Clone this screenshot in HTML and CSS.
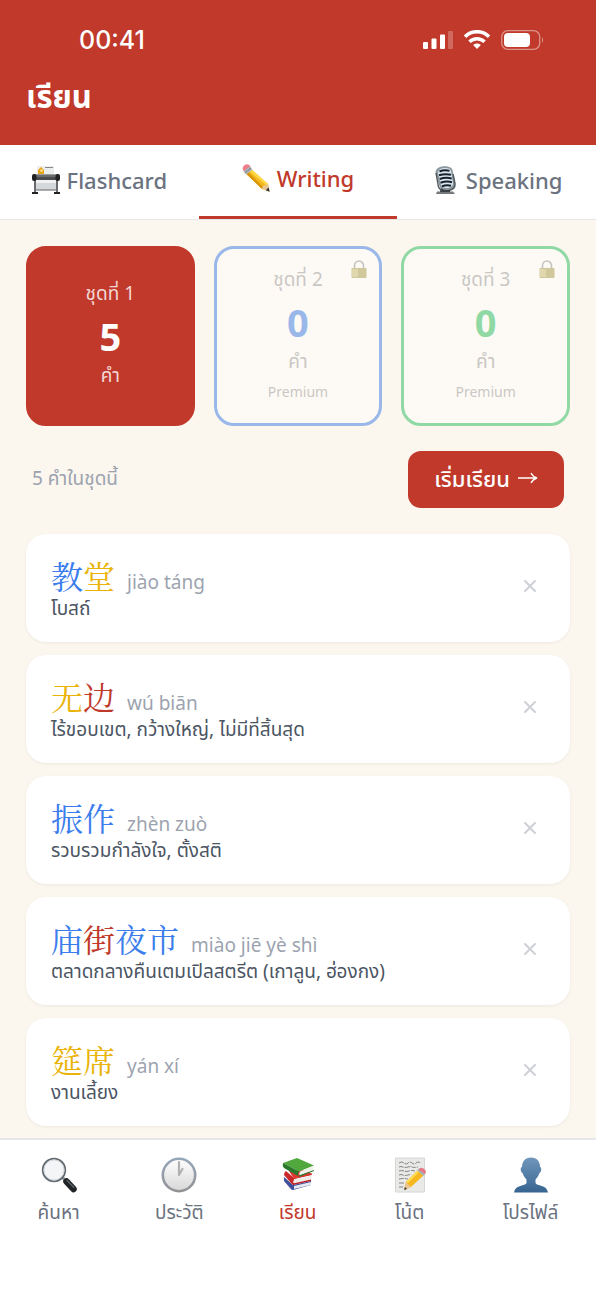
FILE: index.html
```html
<!DOCTYPE html>
<html lang="th">
<head>
<meta charset="utf-8">
<meta name="viewport" content="width=device-width, initial-scale=1">
<title>เรียน</title>
<link rel="stylesheet" href="styles.css">
</head>
<body>
<div class="app">
  <header class="header">
    <div class="status">
      <span class="clock">00:41</span>
      <div class="status-icons">
        <svg width="30" height="20" viewBox="0 0 30 20" fill="#fff" aria-hidden="true"><rect x="0" y="12" width="5" height="7" rx="1"/><rect x="8.500" y="8.500" width="5" height="10.500" rx="1"/><rect x="17" y="4.500" width="5" height="14.500" rx="1"/><rect x="25" y="1" width="5" height="18" rx="1" opacity=".25"/></svg>
        <svg width="28" height="20" viewBox="0 0 28 20" fill="none" stroke="#fff" stroke-width="3.600" aria-hidden="true"><path d="M2 6.700a17 17 0 0 1 24 0"/><path d="M6.500 11.800a10.800 10.800 0 0 1 15 0"/><path d="M14 19l-3.800-4a5.600 5.600 0 0 1 7.600 0z" fill="#fff" stroke="none"/></svg>
        <svg width="44" height="20" viewBox="0 0 44 20" aria-hidden="true"><rect x=".7" y=".7" width="38" height="18.600" rx="6" fill="none" stroke="#fff" stroke-width="1.300" opacity=".45"/><rect x="3" y="3" width="26" height="14" rx="4" fill="#fff"/><path d="M41 7q2 3 0 6z" fill="#fff" opacity=".5"/></svg>
      </div>
    </div>
    <h1 class="title">เรียน</h1>
  </header>

  <nav class="tabs">
    <button class="tab"><svg class="tab-icon" viewBox="0 0 28 28" aria-hidden="true"><path d="M5 0h17v10H5z" fill="#eceeed"/><path d="M9 1l3 3v4H6V4z" fill="#e8a51a"/><path d="M8.500 3.500h2v2h-2z" fill="#fff3c0"/><path d="M13 1.500h8" stroke="#888"/><path d="M4 14h20v10H4z" fill="#d5d8da"/><path d="M4 14h20v3H4z" fill="#f1f2f3"/><path d="M3 14v12M25 14v12" stroke="#44474a" stroke-width="1.600"/><path d="M3 24h22" stroke="#75797b" stroke-width="1.200"/><rect x="1" y="8.500" width="26" height="5.500" rx="2" fill="#4a4c4e"/><path d="M4 10h20" stroke="#8b8e90"/><rect x="0" y="8" width="4.500" height="7" rx="2" fill="#222"/><rect x="23.500" y="8" width="4.500" height="7" rx="2" fill="#222"/><path d="M0 27h6M22 27h6" stroke="#222" stroke-width="1.800"/></svg>Flashcard</button>
    <button class="tab active" aria-current="page"><svg class="tab-icon" viewBox="0 0 28 28" aria-hidden="true"><path d="M8 4l18 16 1.500 7.500L20 25 2 8z" fill="#f3b91d"/><path d="M8 4l18 16-2 1L5.500 5.500z" fill="#ffd94a"/><path d="M3.500 9L20 25l1-2L5 7z" fill="#d89408"/><path d="M1 3Q3-.8 7 .8l2 2.400L2.500 8Q0 5.500 1 3z" fill="#ed7e88"/><path d="M7.500 2.500l3 3-6 5-3-3z" fill="#abb3ba"/><path d="M9 4L3.200 8.800" stroke="#777f88"/><path d="M20 25l1-3 5-2 1.500 7.500z" fill="#e9c695"/><path d="M24.800 25l2-1.500.8 4.200-3.600-1.200z" fill="#363636"/></svg>Writing</button>
    <button class="tab"><svg class="tab-icon" viewBox="0 0 28 28" aria-hidden="true"><path d="M6 25.500h16l2 2.500H5z" fill="#75797c"/><path d="M10 21h10l-1 5H9z" fill="#3b4044"/><path d="M4.500 6Q5 1 13 .3 20 0 21.500 4L24 17q0 6-7 7-7 .5-8.500-4z" fill="#8b979f"/><path d="M7 7Q7 2.500 13 2q6-.5 7 3l2 12q0 4-5 5-6 .5-7-3z" fill="#dce6ec"/><path d="M8.500 5.500q5-2 10-.6M8 9.300q6-2 12-.5M8.700 13q6-2 12-.5M9.500 16.700q6-2 11.500-.5M11 20.300q5-1.800 9-.5" fill="none" stroke="#15222e" stroke-width="2"/><path d="M22 8l2 10q0 5-5 6" fill="none" stroke="#565e63" stroke-width="1.600"/><path d="M5 7l2.500 14 3 4" fill="none" stroke="#50575b" stroke-width="1.400"/></svg>Speaking</button>
  </nav>

  <main class="content">
    <section class="sets">
      <button class="set set-current"><span class="set-name">ชุดที่ 1</span><strong class="set-count">5</strong><span class="set-unit">คำ</span></button>
      <button class="set set-blue"><svg class="lock" viewBox="0 0 16 18" aria-hidden="true"><path d="M3.500 9V5.500a4.500 4.500 0 0 1 9 0V9" fill="none" stroke="#8d9294" stroke-width="1.600"/><rect x=".5" y="8" width="15" height="10" rx="1" fill="#a69a48"/><path d="M1 9h6v8H1z" fill="#c5bb70"/></svg><span class="set-name">ชุดที่ 2</span><strong class="set-count">0</strong><span class="set-unit">คำ</span><span class="set-plan">Premium</span></button>
      <button class="set set-green"><svg class="lock" viewBox="0 0 16 18" aria-hidden="true"><path d="M3.500 9V5.500a4.500 4.500 0 0 1 9 0V9" fill="none" stroke="#8d9294" stroke-width="1.600"/><rect x=".5" y="8" width="15" height="10" rx="1" fill="#a69a48"/><path d="M1 9h6v8H1z" fill="#c5bb70"/></svg><span class="set-name">ชุดที่ 3</span><strong class="set-count">0</strong><span class="set-unit">คำ</span><span class="set-plan">Premium</span></button>
    </section>

    <div class="summary">
      <span class="summary-text">5 คำในชุดนี้</span>
      <button class="start">เริ่มเรียน <svg width="21" height="14" viewBox="0 0 21 14" fill="none" stroke="#fff" stroke-width="1.300" aria-hidden="true"><path d="M1 7h18M14 2q2 4 6 5-4 1-6 5"/></svg></button>
    </div>

    <ul class="words">
      <li class="word"><div class="word-text"><div class="word-head"><span class="hanzi" lang="zh-Hans"><span class="t4">教</span><span class="t2">堂</span></span><span class="pinyin">jiào táng</span></div><p class="meaning">โบสถ์</p></div><button class="remove" aria-label="ลบ"><svg width="14" height="14" viewBox="0 0 14 14"><path d="M2 2l10 10M12 2L2 12"/></svg></button></li>
      <li class="word"><div class="word-text"><div class="word-head"><span class="hanzi" lang="zh-Hans"><span class="t2">无</span><span class="t1">边</span></span><span class="pinyin">wú biān</span></div><p class="meaning">ไร้ขอบเขต, กว้างใหญ่, ไม่มีที่สิ้นสุด</p></div><button class="remove" aria-label="ลบ"><svg width="14" height="14" viewBox="0 0 14 14"><path d="M2 2l10 10M12 2L2 12"/></svg></button></li>
      <li class="word"><div class="word-text"><div class="word-head"><span class="hanzi" lang="zh-Hans"><span class="t4">振</span><span class="t4">作</span></span><span class="pinyin">zhèn zuò</span></div><p class="meaning">รวบรวมกำลังใจ, ตั้งสติ</p></div><button class="remove" aria-label="ลบ"><svg width="14" height="14" viewBox="0 0 14 14"><path d="M2 2l10 10M12 2L2 12"/></svg></button></li>
      <li class="word"><div class="word-text"><div class="word-head"><span class="hanzi" lang="zh-Hans"><span class="t4">庙</span><span class="t1">街</span><span class="t4">夜</span><span class="t4">市</span></span><span class="pinyin">miào jiē yè shì</span></div><p class="meaning">ตลาดกลางคืนเตมเปิลสตรีต (เกาลูน, ฮ่องกง)</p></div><button class="remove" aria-label="ลบ"><svg width="14" height="14" viewBox="0 0 14 14"><path d="M2 2l10 10M12 2L2 12"/></svg></button></li>
      <li class="word"><div class="word-text"><div class="word-head"><span class="hanzi" lang="zh-Hans"><span class="t2">筵</span><span class="t2">席</span></span><span class="pinyin">yán xí</span></div><p class="meaning">งานเลี้ยง</p></div><button class="remove" aria-label="ลบ"><svg width="14" height="14" viewBox="0 0 14 14"><path d="M2 2l10 10M12 2L2 12"/></svg></button></li>
    </ul>
  </main>

  <nav class="bottom">
    <a class="nav-item" href="#search"><svg class="nav-icon" viewBox="0 0 36 36" aria-hidden="true"><path d="M21 20l5 5" stroke="#8e959a" stroke-width="3"/><path d="M25.500 24.500l7 7.500" stroke="#202426" stroke-width="6.500" stroke-linecap="round"/><path d="M26 23.500l7 7" stroke="#62686c" stroke-width="1.200" stroke-linecap="round"/><circle cx="13" cy="13" r="11.300" fill="#f3f5f7" stroke="#626a70" stroke-width="1.800"/><circle cx="13" cy="13" r="10.200" fill="none" stroke="#c9cfd4"/></svg>ค้นหา</a>
    <a class="nav-item" href="#history"><svg class="nav-icon" viewBox="0 0 36 36" aria-hidden="true"><defs><linearGradient id="face" x2="0" y2="1"><stop stop-color="#fff"/><stop offset="1" stop-color="#d7d7d8"/></linearGradient><linearGradient id="rim" x2="0" y2="1"><stop stop-color="#95a6ba"/><stop offset="1" stop-color="#929294"/></linearGradient></defs><circle cx="18" cy="18" r="16.200" fill="url(#face)" stroke="url(#rim)" stroke-width="2.600"/><path d="M18 5v13l3.500-6" fill="none" stroke="#b0b0b1" stroke-width="2.200" stroke-linejoin="round" stroke-linecap="round"/></svg>ประวัติ</a>
    <a class="nav-item active" href="#learn" aria-current="page"><svg class="nav-icon" viewBox="0 0 36 36" aria-hidden="true"><path d="M4 20l9 8 18-4v4l-18 5q-2 0-3-2l-6-7z" fill="#3e4f9c"/><path d="M14 29l17-4v3l-17 4z" fill="#e5e8f1"/><path d="M6 14l8 7 17-5 1 2-18 4v6q-2 0-3-2l-7-8q0-3 2-4z" fill="#c92728"/><path d="M9 14l16-1 7 4-18 5z" fill="#dd3833"/><path d="M14 22.500l17-4v4l-17 4q-1.500-2 0-4z" fill="#f1ece7"/><path d="M31 22.500v1.500l-18 4v-1.500z" fill="#b71f23"/><path d="M3 6L17 1l17 7.500-15 6z" fill="#51a83c"/><path d="M3 6l16 8.500q-2 3 0 5L4 11q-2-2-1-5z" fill="#28772a"/><path d="M20 14.500L33 9v4.500l-13 5q-1.500-2 0-4z" fill="#eef2e9"/><path d="M34 13v1l-15 6v-1.500z" fill="#28772a"/></svg>เรียน</a>
    <a class="nav-item" href="#notes"><svg class="nav-icon" viewBox="0 0 36 36" aria-hidden="true"><path d="M3.500 1h29v34h-29z" fill="#e9e9e8" stroke="#d6d6d6"/><path d="M7 6q3-2 5 0t4 0 4 0 4 0 5 0M7 10q2-1 4 0t5 0 4 0 6 0M7 14q3-1 5 0t5 0 6 0M7 18q2-1 4 0t5 0 3 0M7 22q4-1 9 0M7 26h6M7 30h4" fill="none" stroke="#858585" stroke-width="1" stroke-dasharray="5 1"/><path d="M27 12l6 5-14 13-7 3 2-8z" fill="#f5b91e"/><path d="M27 12l2 1-13 13-2-1z" fill="#ffdc53"/><path d="M25 13l3-2 6 5-3 3z" fill="#a9b2b9"/><path d="M28 11q3-1 6 3l-1 3-6-4z" fill="#ea7685"/><path d="M14 25l5 5-7 3z" fill="#e9c694"/><path d="M12 33l1-3 2 2z" fill="#333"/></svg>โน้ต</a>
    <a class="nav-item" href="#profile"><svg class="nav-icon" viewBox="0 0 36 36" aria-hidden="true"><defs><linearGradient id="bust" x2="0" y2="1"><stop stop-color="#7197bd"/><stop offset="1" stop-color="#376590"/></linearGradient></defs><path d="M18 .5c6 0 9 4 9 9.500 2 0 1.500 5-.5 6-1 3-2.500 5-4 6.500v3.500c1 3 11.500 1.500 12.500 9.500H1C2 27.500 12.500 29 13.500 26v-3.500C12 21 10.500 19 9.500 16 7.500 15 7 10 9 10 9 4.500 12 .5 18 .5z" fill="url(#bust)"/></svg>โปรไฟล์</a>
  </nav>
</div>
</body>
</html>
```
FILE: styles.css
```css
* {
  box-sizing: border-box;
}

body {
  margin: 0;
  background: #fbf6ee;
  color: #4b5563;
  font-family: "Noto Sans", "Noto Sans Thai", "Noto Sans CJK SC", sans-serif;
  font-size: 20px;
}

button {
  border: 0;
  padding: 0;
  background: none;
  color: inherit;
  font: inherit;
  cursor: pointer;
}

.app {
  display: flex;
  flex-direction: column;
  min-height: 100vh;
}

.header {
  background: #c0392b;
  color: #fff;
  padding: 20px 25px 26px 26px;
}

.status {
  display: flex;
  justify-content: space-between;
  align-items: center;
  height: 40px;
  padding: 0 26px 0 53px;
}

.clock {
  font-family: Inter, sans-serif;
  font-size: 25px;
  font-weight: 500;
}

.status-icons {
  display: flex;
  gap: 10px;
}

.title {
  margin: 13px 0 0;
  font-size: 31px;
  line-height: 46px;
  font-weight: 700;
}

.tabs {
  display: grid;
  grid-template-columns: repeat(3, 1fr);
  height: 75px;
  background: #fff;
  border-bottom: 1px solid #e5e7eb;
}

.tab {
  display: flex;
  align-items: center;
  justify-content: center;
  gap: 7px;
  padding-bottom: 5px;
  color: #6b7280;
  font-size: 22px;
  font-weight: 500;
}

.tab.active {
  border-bottom: 3px solid #c0392b;
  color: #c0392b;
}

.tab-icon {
  width: 28px;
  height: 28px;
}

.content {
  flex: 1;
  padding: 26px 26px 12px;
}

.sets {
  display: grid;
  grid-template-columns: repeat(3, 1fr);
  gap: 19px;
}

.set {
  position: relative;
  display: flex;
  flex-direction: column;
  align-items: center;
  justify-content: center;
  height: 180px;
  padding-bottom: 8px;
  border: 3px solid #3b82f6;
  border-radius: 20px;
  background: #fff;
  color: #9ca3af;
}

.set-current {
  background: #c0392b;
  border-color: #c0392b;
  color: #f3d7d5;
}

.set-current .set-count {
  color: #fff;
}

.set-blue,
.set-green {
  padding-bottom: 5px;
  opacity: 0.5;
  color: #999;
}

.set-blue {
  border-color: #3b7ae8;
}

.set-blue .set-count {
  color: #3b7ae8;
}

.set-green {
  border-color: #27bd5c;
}

.set-green .set-count {
  color: #27bd5c;
}

.set-name {
  font-size: 19px;
  line-height: 28px;
}

.set-count {
  font-size: 38px;
  line-height: 58px;
}

.set-unit {
  font-size: 19px;
  line-height: 20px;
}

.set-plan {
  margin-top: 11px;
  font-size: 14px;
  line-height: 20px;
}

.lock {
  position: absolute;
  top: 11px;
  right: 12px;
  width: 16px;
  height: 18px;
}

.summary {
  display: flex;
  align-items: center;
  justify-content: space-between;
  padding: 25px 6px 26px;
  color: #9ca3af;
  font-size: 19px;
  line-height: 28px;
}

.summary-text {
  padding-bottom: 4px;
}

.start {
  display: flex;
  align-items: center;
  gap: 7px;
  height: 57px;
  padding: 0 26px 4px;
  border-radius: 13px;
  background: #c0392b;
  color: #fff;
  font-size: 22px;
  font-weight: 500;
}

.words {
  display: grid;
  gap: 13px;
  margin: 0;
  padding: 0;
  list-style: none;
}

.word {
  display: flex;
  align-items: center;
  justify-content: space-between;
  height: 108px;
  padding: 0 33px 0 25px;
  border-radius: 20px;
  background: #fff;
  box-shadow: 0 1px 3px rgb(0 0 0 / 6%);
}

.word-text {
  padding-top: 2px;
}

.word-head {
  display: flex;
  align-items: baseline;
  gap: 12px;
  line-height: 30px;
}

.hanzi {
  font-family: "Noto Serif CJK SC", "Noto Sans CJK SC", serif;
  font-size: 32px;
}

.t1 {
  color: #c0392b;
}

.t2 {
  color: #eab308;
}

.t4 {
  color: #3b7ded;
}

.pinyin {
  color: #9ca3af;
  font-size: 19px;
}

.meaning {
  margin: 0;
  font-size: 19px;
  line-height: 22px;
}

.remove {
  display: flex;
  padding-bottom: 5px;
}

.remove path {
  fill: none;
  stroke: #cdd0d5;
  stroke-width: 2;
  stroke-linecap: round;
}

.bottom {
  display: flex;
  justify-content: space-around;
  align-items: flex-start;
  height: 152px;
  padding-top: 17px;
  border-top: 2px solid #e5e7eb;
  background: #fff;
}

.nav-item {
  display: flex;
  flex-direction: column;
  align-items: center;
  gap: 5px;
  color: #6b7280;
  font-size: 19px;
  line-height: 28px;
  text-decoration: none;
}

.nav-item.active {
  color: #c0392b;
}

.nav-icon {
  width: 36px;
  height: 36px;
}
```
